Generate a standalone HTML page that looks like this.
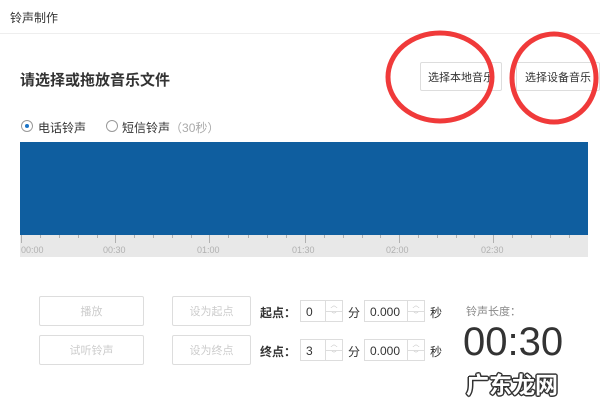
<!DOCTYPE html>
<html><head><meta charset="utf-8"><style>
*{margin:0;padding:0;box-sizing:border-box}
body{width:600px;height:413px;background:#fff;position:relative;overflow:hidden;font-family:"Liberation Sans","Noto Sans CJK SC",sans-serif;color:#333}
.a{position:absolute;white-space:nowrap}
.btn{position:absolute;border:1px solid #ddd;border-radius:2px;background:#fff;font-size:11px;color:#ccc;display:flex;align-items:center;justify-content:center}
.tb{position:absolute;border:1px solid #ddd;font-size:12px;color:#333;background:#fff}
.tb span{position:absolute;left:5px;top:4px}
.sp{position:absolute;right:0;top:0;width:17px;height:100%;border-left:1px solid #ddd;font-size:7px;color:#bbb;text-align:center;line-height:10px}
.sp:after{content:"";position:absolute;left:0;right:0;top:50%;border-top:1px solid #ddd}
</style></head><body>
<div class="a" style="left:10px;top:9px;font-size:12px">铃声制作</div>
<div class="a" style="left:0;top:33px;width:600px;border-top:1px solid #eee"></div>
<div class="a" style="left:20px;top:69px;font-size:15px;font-weight:bold;color:#333">请选择或拖放音乐文件</div>
<div class="btn" style="left:420px;top:62px;width:82px;height:29px;color:#333;border-color:#ddd">选择本地音乐</div>
<div class="btn" style="left:516px;top:62px;width:84px;height:29px;color:#333;border-color:#ddd">选择设备音乐</div>
<svg class="a" style="left:0;top:0" width="600" height="140"><ellipse cx="440" cy="77" rx="52" ry="44" fill="none" stroke="#f03a3a" stroke-width="5"/><ellipse cx="554" cy="78" rx="42" ry="44" fill="none" stroke="#f03a3a" stroke-width="5"/></svg>
<div class="a" style="left:21px;top:120px;width:12px;height:12px;border:1px solid #999;border-radius:50%"><div style="position:absolute;left:3px;top:3px;width:4px;height:4px;border-radius:50%;background:#1b74c7"></div></div>
<div class="a" style="left:38px;top:119px;font-size:12px">电话铃声</div>
<div class="a" style="left:106px;top:120px;width:12px;height:12px;border:1px solid #999;border-radius:50%"></div>
<div class="a" style="left:122px;top:119px;font-size:12px">短信铃声<span style="color:#aaa">（30秒）</span></div>
<div class="a" style="left:20px;top:142px;width:568px;height:93px;background:#0f5e9f"></div>
<div class="a" style="left:20px;top:235px;width:568px;height:22px;background:#e8e8e8"></div>
<svg class="a" style="left:0;top:235px" width="600" height="22">
<g fill="#b0b0b0" font-size="9" font-family="Liberation Sans,sans-serif">
<text x="21" y="18">00:00</text><text x="103" y="18">00:30</text><text x="197" y="18">01:00</text><text x="292" y="18">01:30</text><text x="386" y="18">02:00</text><text x="481" y="18">02:30</text>
</g>
<g stroke="#b0b0b0">
<path d="M21.5 0v8M115.5 0v8M209.5 0v8M305.5 0v8M399.5 0v8M493.5 0v8M40.5 0v3M59.5 0v3M78.5 0v3M97.5 0v3M134.5 0v3M153.5 0v3M172.5 0v3M191.5 0v3M228.5 0v3M248.5 0v3M267.5 0v3M286.5 0v3M324.5 0v3M343.5 0v3M362.5 0v3M380.5 0v3M418.5 0v3M437.5 0v3M456.5 0v3M474.5 0v3M512.5 0v3M531.5 0v3M550.5 0v3M569.5 0v3"/>
</g></svg>
<div class="btn" style="left:39px;top:296px;width:105px;height:30px">播放</div>
<div class="btn" style="left:39px;top:335px;width:105px;height:30px">试听铃声</div>
<div class="btn" style="left:172px;top:296px;width:79px;height:30px">设为起点</div>
<div class="btn" style="left:172px;top:335px;width:79px;height:30px">设为终点</div>
<div class="a" style="left:260px;top:304px;font-size:12px;font-weight:bold">起点：</div>
<div class="a" style="left:260px;top:343px;font-size:12px;font-weight:bold">终点：</div>
<div class="tb" style="left:300px;top:300px;width:43px;height:22px"><span>0</span><div class="sp">︿<br>﹀</div></div>
<div class="tb" style="left:300px;top:339px;width:43px;height:22px"><span>3</span><div class="sp">︿<br>﹀</div></div>
<div class="a" style="left:348px;top:304px;font-size:12px">分</div>
<div class="a" style="left:348px;top:343px;font-size:12px">分</div>
<div class="tb" style="left:364px;top:300px;width:61px;height:22px"><span>0.000</span><div class="sp">︿<br>﹀</div></div>
<div class="tb" style="left:364px;top:339px;width:61px;height:22px"><span>0.000</span><div class="sp">︿<br>﹀</div></div>
<div class="a" style="left:430px;top:304px;font-size:12px">秒</div>
<div class="a" style="left:430px;top:343px;font-size:12px">秒</div>
<div class="a" style="left:466px;top:303px;font-size:11px;color:#888">铃声长度：</div>
<div class="a" style="left:463px;top:320px;font-size:40px;color:#333;line-height:44px">00:30</div>
<div class="a" style="left:466px;top:372px;font-size:23px;font-weight:bold;color:#fff;line-height:26px;text-shadow:-1.5px 0 #333,1.5px 0 #333,0 -1.5px #333,0 1.5px #333,-1px -1px #333,1px 1px #333,-1px 1px #333,1px -1px #333">广东龙网</div>
</body></html>
